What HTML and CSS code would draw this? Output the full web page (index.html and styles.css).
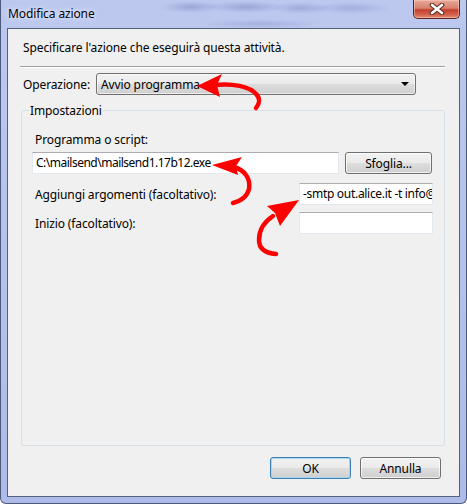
FILE: index.html
```html
<!DOCTYPE html>
<html lang="it">
<head>
<meta charset="utf-8">
<title>Modifica azione</title>
<link rel="stylesheet" href="styles.css">
</head>
<body>
<div class="window">
  <div class="titlebar">
    <span class="title">Modifica azione</span>
    <button class="close" aria-label="Chiudi">
      <svg width="16" height="12" viewBox="0 0 16 12">
        <path d="M3 2 L13 10 M13 2 L3 10" stroke="#5a2a22" stroke-width="4.6" stroke-linecap="round"/>
        <path d="M3 2 L13 10 M13 2 L3 10" stroke="#ffffff" stroke-width="2.6" stroke-linecap="round"/>
      </svg>
    </button>
  </div>
  <div class="client">
    <p class="intro">Specificare l'azione che eseguirà questa attività.</p>
    <div class="sep"></div>
    <div class="op-row">
      <span class="op-label">Operazione:</span>
      <div class="combo">
        <span>Avvio programma</span>
        <span class="combo-arrow"></span>
      </div>
    </div>
    <fieldset class="group">
      <legend>Impostazioni</legend>
      <div class="field-label first">Programma o script:</div>
      <div class="row">
        <div class="input wide">C:\mailsend\mailsend1.17b12.exe</div>
        <button class="btn browse">Sfoglia...</button>
      </div>
      <div class="row pair">
        <span class="field-label">Aggiungi argomenti (facoltativo):</span>
        <div class="input narrow">-smtp out.alice.it -t info@</div>
      </div>
      <div class="row pair second">
        <span class="field-label">Inizio (facoltativo):</span>
        <div class="input narrow"></div>
      </div>
    </fieldset>
    <div class="actions">
      <button class="btn default">OK</button>
      <button class="btn">Annulla</button>
    </div>
  </div>
</div>
<svg class="arrows" width="467" height="504" viewBox="0 0 467 504">
  <g fill="none" stroke="#ff0000" stroke-width="4.5" stroke-linecap="round">
    <path d="M214 85 C232 83 250 86 257 95 C261 100 259 104 256 108"/>
    <path d="M234 167 C244 170 251 178 249 189 C247 197 241 201 233 203"/>
    <path d="M273 216 C264 222 259 230 259 240 C259 248 264 253 276 254"/>
  </g>
  <g fill="#ff0000">
    <polygon points="197,86 222,74 217,85 220,97"/>
    <polygon points="212,165 242,157 236,166 238,175"/>
    <polygon points="299,200 267,206 275,213 280,226"/>
  </g>
</svg>
</body>
</html>
```
FILE: styles.css
```css
* { box-sizing: border-box; }

html, body {
  margin: 0;
  padding: 0;
}

body {
  width: 467px;
  height: 504px;
  position: relative;
  overflow: hidden;
  font-family: "Noto Sans", "Open Sans", "DejaVu Sans", sans-serif;
  font-size: 12px;
  letter-spacing: -0.12px;
  color: #000;
}

.window {
  width: 467px;
  height: 504px;
  display: flex;
  flex-direction: column;
  padding: 0 6px 6px 6px;
  border: 1px solid #4b5a7c;
  border-top: none;
  border-radius: 0 0 6px 6px;
  background:
    radial-gradient(ellipse 30px 6px at 190px 7px, rgba(90,105,170,0.35), transparent),
    radial-gradient(ellipse 40px 6px at 245px 7px, rgba(90,105,170,0.35), transparent),
    radial-gradient(ellipse 30px 6px at 300px 8px, rgba(90,105,170,0.3), transparent),
    radial-gradient(ellipse 40px 6px at 350px 8px, rgba(90,105,170,0.25), transparent),
    radial-gradient(ellipse 60px 5px at 260px 24px, rgba(100,115,180,0.25), transparent),
    linear-gradient(180deg, #bdc8ef 0%, #b6c3ed 40%, #aebbe8 100%);
}

.titlebar {
  height: 28px;
  flex: 0 0 28px;
  display: flex;
  align-items: flex-start;
}

.title {
  margin: 6px 0 0 1px;
  line-height: 16px;
  text-shadow: 0 0 6px #e8eeff, 0 0 3px #e8eeff;
}

.close {
  margin: 0 0 0 auto;
  width: 47px;
  height: 19px;
  padding: 0;
  border: 1px solid #5e2320;
  border-top: none;
  border-radius: 0 0 5px 5px;
  background: linear-gradient(180deg, #e9a898 0%, #d8826f 45%, #c2402e 55%, #d2604a 80%, #e08c74 100%);
  box-shadow: inset 0 0 0 1px rgba(255,220,210,0.45);
  display: flex;
  align-items: center;
  justify-content: center;
}

.close svg { display: block; }

.client {
  flex: 1;
  background: #f0f0f0;
  border: 1px solid #55607a;
  display: flex;
  flex-direction: column;
}

.intro {
  margin: 11px 0 0 15px;
  line-height: 15px;
}

.sep {
  margin: 11px 14px 0 12px;
  height: 2px;
  border-top: 1px solid #a0a0a0;
  border-bottom: 1px solid #ffffff;
}

.op-row {
  margin-top: 5px;
  display: flex;
  align-items: center;
  padding-left: 15px;
}

.op-label { width: 73px; }

.combo {
  width: 320px;
  height: 22px;
  border: 1px solid #707070;
  border-radius: 3px;
  background: linear-gradient(180deg, #f2f2f2 0%, #ebebeb 48%, #dddddd 52%, #cfcfcf 100%);
  box-shadow: inset 0 0 0 1px rgba(255,255,255,0.6);
  display: flex;
  align-items: center;
  justify-content: space-between;
  padding: 0 6px 0 4px;
}

.combo-arrow {
  width: 0;
  height: 0;
  border-left: 4px solid transparent;
  border-right: 4px solid transparent;
  border-top: 4px solid #000;
}

.group {
  margin: 8px 14px 0 13px;
  padding: 0 12px 0 10px;
  border: 1px solid #d5dfe5;
  border-radius: 3px;
  height: 343px;
  min-width: 0;
}

.group legend {
  padding: 0 1px;
  margin-left: -3px;
  line-height: 15px;
}

.field-label {
  padding-left: 3px;
  line-height: 15px;
}

.field-label.first { margin-top: 14px; }

.row {
  display: flex;
  align-items: center;
  justify-content: space-between;
  margin-top: 5px;
}

.row.pair { margin-top: 9px; }
.row.pair.second { margin-top: 7px; }

.input {
  height: 22px;
  background: #fff;
  border: 1px solid #e3e9ef;
  border-top-color: #abadb3;
  line-height: 20px;
  padding-left: 3px;
  white-space: nowrap;
  overflow: hidden;
}

.input.wide { width: 307px; letter-spacing: -0.5px; }
.input.narrow { width: 134px; margin-right: -1px; letter-spacing: -0.3px; }

.btn {
  font: inherit;
  letter-spacing: inherit;
  color: #000;
  height: 22px;
  border: 1px solid #707070;
  border-radius: 3px;
  background: linear-gradient(180deg, #f2f2f2 0%, #ebebeb 48%, #dddddd 52%, #cfcfcf 100%);
  box-shadow: inset 0 0 0 1px rgba(255,255,255,0.7);
  padding: 0;
}

.btn.browse { width: 87px; }

.actions {
  display: flex;
  justify-content: flex-end;
  gap: 9px;
  margin: 11px 18px 0 0;
}

.actions .btn { width: 81px; }

.btn.default {
  border-color: #3c7fb1;
  box-shadow: inset 0 0 0 1px #a6d8f2;
}

.arrows {
  position: absolute;
  top: 0;
  left: 0;
  pointer-events: none;
}
```
